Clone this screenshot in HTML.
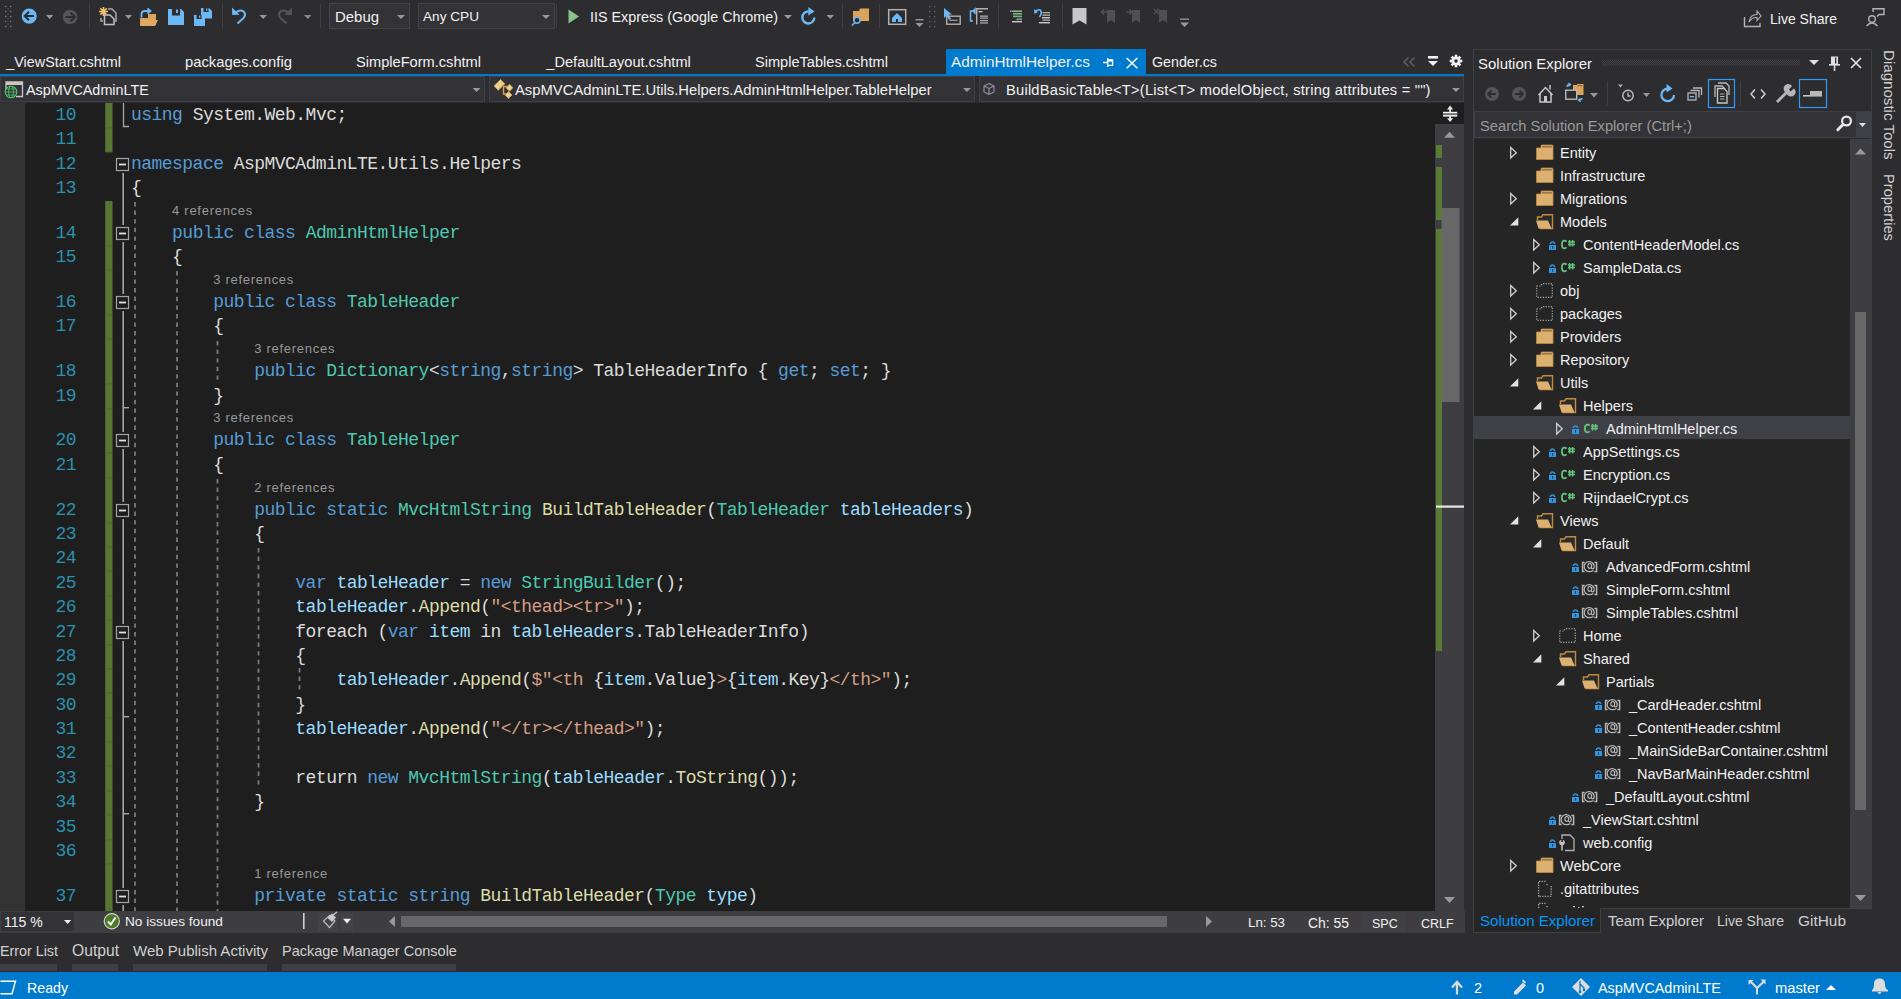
<!DOCTYPE html><html><head><meta charset="utf-8"><style>
html,body{margin:0;padding:0}
body{width:1901px;height:999px;background:#2d2d30;position:relative;overflow:hidden;font-family:'Liberation Sans',sans-serif}
.a{position:absolute}
.t{position:absolute;line-height:0;white-space:pre;font-family:'Liberation Sans',sans-serif}
.c{position:absolute;line-height:0;white-space:pre;font-family:'Liberation Mono',monospace;font-size:18px;letter-spacing:-0.531px;color:#dcdcdc;left:131px}
.k{color:#569cd6}.ty{color:#4ec9b0}.s{color:#d69d85}.v{color:#9cdcfe}.m{color:#dcdcaa}
.ln{position:absolute;line-height:0;white-space:pre;font-family:'Liberation Mono',monospace;font-size:18px;letter-spacing:-0.55px;color:#2b91af;text-align:right;left:20px;width:56px}
.cl{position:absolute;line-height:0;white-space:pre;font-family:'Liberation Sans',sans-serif;font-size:13px;letter-spacing:0.72px;color:#999999}
</style></head><body>

<div class="a" style="left:329px;top:3px;width:81px;height:26px;background:#333337;box-sizing:border-box;border:1px solid #434346;"></div>
<div class="t" style="left:335.0px;top:16.92px;font-size:14.94px;color:#f1f1f1;">Debug</div>
<div class="a" style="left:418px;top:3px;width:137px;height:26px;background:#333337;box-sizing:border-box;border:1px solid #434346;"></div>
<div class="t" style="left:423.0px;top:17.37px;font-size:13.63px;color:#f1f1f1;">Any CPU</div>
<div class="t" style="left:590.0px;top:17.13px;font-size:14.33px;color:#f1f1f1;">IIS Express (Google Chrome)</div>
<div class="t" style="left:1770.0px;top:19.23px;font-size:14.02px;color:#f1f1f1;">Live Share</div>
<svg class="a" style="left:0;top:0" width="1901" height="40" viewBox="0 0 1901 40"><rect x="5" y="5.8" width="1.4" height="1.4" fill="#777"/><rect x="10" y="5.8" width="1.4" height="1.4" fill="#777"/><rect x="5" y="10.8" width="1.4" height="1.4" fill="#777"/><rect x="10" y="10.8" width="1.4" height="1.4" fill="#777"/><rect x="5" y="15.8" width="1.4" height="1.4" fill="#777"/><rect x="10" y="15.8" width="1.4" height="1.4" fill="#777"/><rect x="5" y="20.8" width="1.4" height="1.4" fill="#777"/><rect x="10" y="20.8" width="1.4" height="1.4" fill="#777"/><rect x="5" y="25.8" width="1.4" height="1.4" fill="#777"/><rect x="10" y="25.8" width="1.4" height="1.4" fill="#777"/><rect x="7.5" y="8.3" width="1.4" height="1.4" fill="#555"/><rect x="7.5" y="13.3" width="1.4" height="1.4" fill="#555"/><rect x="7.5" y="18.3" width="1.4" height="1.4" fill="#555"/><rect x="7.5" y="23.3" width="1.4" height="1.4" fill="#555"/><circle cx="29.2" cy="16.1" r="7.6" fill="#6cb8f6"/><path d="M24.5 16 H34 M29 11.8 L24.7 16 L29 20.2" stroke="#2d2d30" stroke-width="2.1" fill="none"/><path d="M46 15 H53.3 L49.65 19 Z" fill="#999999"/><circle cx="70.1" cy="17" r="7.3" fill="#555"/><path d="M65.5 17 H75 M70.5 12.8 L74.8 17 L70.5 21.2" stroke="#2d2d30" stroke-width="2.1" fill="none"/><rect x="89" y="4" width="1" height="24" fill="#3f3f46"/><path d="M103.5 7 V16 M99 11.5 H108 M100.3 8.3 L106.7 14.7 M106.7 8.3 L100.3 14.7" stroke="#f0c070" stroke-width="1.6"/><path d="M108 9 H112 L116 13 V22 M101 18 V21 H103" stroke="#a8a8a8" stroke-width="1.5" fill="none"/><path d="M104.5 15 H110 L114 19 V24.5 H104.5 Z" stroke="#c0c0c0" stroke-width="1.5" fill="none"/><path d="M125 15 H132 L128.5 19 Z" fill="#999999"/><path d="M140 18 H148 V14 H156 V25 H140 Z" fill="#dca35a"/><path d="M142 20 H158 L155 26 H140 Z" fill="#e2aa60"/><path d="M141.5 17.5 V14 Q141.5 11 145 11 H150 M147.5 8.3 L150.5 11 L147.5 13.7" stroke="#6cb8f6" stroke-width="1.8" fill="none"/><path d="M168 9 H181 L184 12 V25 H168 Z" fill="#6cb8f6"/><rect x="172" y="9" width="8" height="6.5" fill="#2d2d30"/><rect x="176" y="9.5" width="2" height="3.5" fill="#6cb8f6"/><path d="M201 8 H209 L212 11 V18.5 H201 Z" fill="#6cb8f6"/><rect x="203.5" y="8" width="5" height="4" fill="#2d2d30"/><rect x="206" y="8.5" width="1.3" height="2.3" fill="#6cb8f6"/><path d="M194 15 H202 L205 18 V26 H194 Z" fill="#6cb8f6"/><rect x="196.5" y="15" width="5" height="4" fill="#2d2d30"/><rect x="199" y="15.5" width="1.3" height="2.3" fill="#6cb8f6"/><rect x="222" y="4" width="1" height="24" fill="#3f3f46"/><path d="M236 12.5 Q240 9 243.5 11.5 Q246.5 14.5 243.5 18 L237.5 23.5" stroke="#6cb8f6" stroke-width="2" fill="none"/><path d="M232 7.5 L232.2 15 L239.5 14.8 Z" fill="#6cb8f6"/><path d="M259.5 15 H267.0 L263.25 19 Z" fill="#999999"/><path d="M288 12.5 Q284 9 280.5 11.5 Q277.5 14.5 280.5 18 L286.5 23.5" stroke="#555" stroke-width="2" fill="none"/><path d="M292 7.5 L291.8 15 L284.5 14.8 Z" fill="#555"/><path d="M304 15 H311.5 L307.75 19 Z" fill="#888"/><rect x="320" y="4" width="1" height="24" fill="#3f3f46"/><path d="M397 15 H405 L401.0 19 Z" fill="#999999"/><path d="M542 15 H550 L546.0 19 Z" fill="#999999"/><rect x="556" y="4" width="1" height="24" fill="#3f3f46"/><path d="M568.5 9.5 V23.5 L579 16.5 Z" fill="#89c58b"/><path d="M784 15 H792 L788.0 19 Z" fill="#999999"/><path d="M814.3 17.5 A6 6 0 1 1 808.5 11.5" stroke="#6cb8f6" stroke-width="2.4" fill="none"/><path d="M808.3 7 L814.6 11.5 L808.3 15.6 Z" fill="#6cb8f6"/><path d="M826.5 15 H834.0 L830.25 19 Z" fill="#999999"/><rect x="842" y="4" width="1" height="24" fill="#3f3f46"/><path d="M853 11 H859 L860 8.5 H869 V21 H853 Z" fill="#dca35a"/><circle cx="857" cy="20.2" r="3" stroke="#6cb8f6" stroke-width="1.5" fill="#2d2d30"/><path d="M855 22.5 L852 25.5" stroke="#6cb8f6" stroke-width="1.6"/><rect x="879" y="4" width="1" height="24" fill="#3f3f46"/><rect x="888.7" y="9.7" width="17" height="14.6" stroke="#b0b0b0" stroke-width="1.5" fill="none"/><path d="M892 18 L897 13 L902 18 V22 H892 Z" fill="#6cb8f6"/><rect x="896" y="19" width="2" height="3" fill="#2d2d30"/><rect x="915.5" y="19" width="8" height="1.4" fill="#999"/><path d="M915.5 23 H923.5 L919.5 27 Z" fill="#999999"/><rect x="929" y="5.9" width="1.3" height="1.3" fill="#666"/><rect x="934" y="5.9" width="1.3" height="1.3" fill="#666"/><rect x="929" y="10.9" width="1.3" height="1.3" fill="#666"/><rect x="934" y="10.9" width="1.3" height="1.3" fill="#666"/><rect x="929" y="15.9" width="1.3" height="1.3" fill="#666"/><rect x="934" y="15.9" width="1.3" height="1.3" fill="#666"/><rect x="929" y="20.9" width="1.3" height="1.3" fill="#666"/><rect x="934" y="20.9" width="1.3" height="1.3" fill="#666"/><rect x="929" y="25.9" width="1.3" height="1.3" fill="#666"/><rect x="934" y="25.9" width="1.3" height="1.3" fill="#666"/><path d="M944 8 V18 L946.5 15.5 L949 20 L951 19 L948.7 14.7 L952 14.5 Z" fill="#6cb8f6"/><rect x="946.7" y="16.2" width="13.5" height="8" stroke="#b0b0b0" stroke-width="1.4" fill="none"/><rect x="949.5" y="19.7" width="8" height="1.3" fill="#999"/><path d="M973 11 H970.5 V21 H973 M970.5 11 H975 M973 11 L975 9 L975 13 Z" stroke="#6cb8f6" stroke-width="1.5" fill="none"/><path d="M976.7 24.5 V8.7 H988" stroke="#b0b0b0" stroke-width="1.4" fill="none"/><rect x="978.5" y="11" width="4" height="1.3" fill="#ccc"/><rect x="980" y="15.5" width="8" height="1.3" fill="#aaa"/><rect x="980" y="17.5" width="8" height="1.3" fill="#aaa"/><rect x="980" y="20" width="8" height="1.3" fill="#aaa"/><rect x="980" y="22.3" width="8" height="1.3" fill="#aaa"/><rect x="998" y="4" width="1" height="24" fill="#3f3f46"/><rect x="1010" y="10.6" width="1.5" height="1.2" fill="#ccc"/><rect x="1012" y="10.6" width="10" height="1.2" fill="#ccc"/><rect x="1013" y="13" width="9" height="1.6" fill="#6fbf6f"/><rect x="1013" y="15.6" width="9" height="1.6" fill="#6fbf6f"/><rect x="1016.5" y="18.5" width="5.5" height="1.6" fill="#999"/><rect x="1012" y="21" width="10" height="1.4" fill="#ccc"/><path d="M1035 12 Q1037 9 1040 10 Q1043 12 1039.5 17" stroke="#6cb8f6" stroke-width="1.6" fill="none"/><path d="M1034 9 L1034.5 14 L1038 12 Z" fill="#6cb8f6"/><rect x="1042.5" y="12" width="7.5" height="1.4" fill="#aaa"/><rect x="1042.5" y="14.5" width="7.5" height="1.4" fill="#aaa"/><rect x="1042" y="17" width="8" height="1.4" fill="#ccc"/><rect x="1042.5" y="19.4" width="7.5" height="1.4" fill="#aaa"/><rect x="1039" y="22" width="11" height="1.4" fill="#ccc"/><rect x="1062" y="4" width="1" height="24" fill="#3f3f46"/><path d="M1072.5 8 H1086.5 V24.5 L1079.5 20.5 L1072.5 24.5 Z" fill="#c8c8c8"/><path d="M1107 10 H1115 V23 L1111 20 L1107 23 Z" fill="#505050"/><path d="M1132 10 H1140 V23 L1136 20 L1132 23 Z" fill="#505050"/><path d="M1159 10 H1167 V23 L1163 20 L1159 23 Z" fill="#505050"/><path d="M1107 12 H1101.5 M1104 9.5 L1101.5 12 L1104 14.5" stroke="#505050" stroke-width="1.6" fill="none"/><path d="M1126 12 H1132 M1129.5 9.5 L1132 12 L1129.5 14.5" stroke="#505050" stroke-width="1.6" fill="none"/><path d="M1154 9 L1159 14 M1159 9 L1154 14" stroke="#505050" stroke-width="1.6"/><rect x="1180" y="18.5" width="9" height="1.3" fill="#999"/><path d="M1180 22.5 H1189 L1184.5 27.0 Z" fill="#999999"/><path d="M1744.5 17 V26.5 H1760 V23" stroke="#b4b4b4" stroke-width="1.4" fill="none"/><path d="M1749 22 Q1750 14.5 1757 14.5 V11 L1761 16 L1757 20.5 V17.5 Q1752 17 1749 22 Z" stroke="#b4b4b4" stroke-width="1.1" fill="none"/><circle cx="1872" cy="19" r="3.3" stroke="#b4b4b4" stroke-width="1.4" fill="none"/><path d="M1866.5 26 Q1872 20 1877.5 26" stroke="#b4b4b4" stroke-width="1.4" fill="none"/><path d="M1873 12 V8.7 H1884 V14.5 H1879 L1877 16.5" stroke="#b4b4b4" stroke-width="1.4" fill="none"/></svg>
<div class="a" style="left:946px;top:49px;width:200px;height:25px;background:#007acc;"></div>
<div class="a" style="left:0px;top:74px;width:1464px;height:2px;background:#007acc;"></div>
<div class="t" style="left:6.29px;top:62.11px;font-size:14.37px;color:#f1f1f1;">_ViewStart.cshtml</div>
<div class="t" style="left:185.0px;top:61.96px;font-size:14.81px;color:#f1f1f1;">packages.config</div>
<div class="t" style="left:356.0px;top:62.03px;font-size:14.61px;color:#f1f1f1;">SimpleForm.cshtml</div>
<div class="t" style="left:546.29px;top:62.03px;font-size:14.62px;color:#f1f1f1;">_DefaultLayout.cshtml</div>
<div class="t" style="left:755.0px;top:62.04px;font-size:14.59px;color:#f1f1f1;">SimpleTables.cshtml</div>
<div class="t" style="left:951.0px;top:61.78px;font-size:15.34px;color:#f1f1f1;">AdminHtmlHelper.cs</div>
<div class="t" style="left:1152.0px;top:62.15px;font-size:14.25px;color:#f1f1f1;">Gender.cs</div>
<div class="a" style="left:0px;top:76px;width:485px;height:26px;background:#333337;box-sizing:border-box;border:1px solid #3f3f46;"></div>
<div class="a" style="left:489px;top:76px;width:486px;height:26px;background:#333337;box-sizing:border-box;border:1px solid #3f3f46;"></div>
<div class="a" style="left:979px;top:76px;width:485px;height:26px;background:#333337;box-sizing:border-box;border:1px solid #3f3f46;"></div>
<div class="t" style="left:26.0px;top:90.1px;font-size:14.4px;color:#f1f1f1;">AspMVCAdminLTE</div>
<div class="t" style="left:515.0px;top:89.96px;font-size:14.81px;color:#f1f1f1;">AspMVCAdminLTE.Utils.Helpers.AdminHtmlHelper.TableHelper</div>
<div class="t" style="left:1006px;top:90.0px;font-size:14.7px;color:#f1f1f1;letter-spacing:0.22px">BuildBasicTable&lt;T&gt;(List&lt;T&gt; modelObject, string attributes = &quot;&quot;)</div>
<svg class="a" style="left:0;top:40px" width="1470" height="70" viewBox="0 40 1470 70"><path d="M1103 62.5 H1107.5 M1107.7 58 V67 M1108 60 H1112.6 V65.3 H1108" stroke="#ffffff" stroke-width="1.3" fill="none"/><rect x="1108" y="59.5" width="5" height="2.2" fill="#ffffff"/><path d="M1126.7 58 L1137.3 68.3 M1137.3 58 L1126.7 68.3" stroke="#ffffff" stroke-width="1.6"/><path d="M1408.5 57.5 L1404 62 L1408.5 66.5 M1414.5 57.5 L1410 62 L1414.5 66.5" stroke="#5a5e62" stroke-width="1.6" fill="none"/><rect x="1428" y="56" width="10" height="2.6" fill="#f0f0f0"/><path d="M1428 61 H1438 L1433 66 Z" fill="#f0f0f0"/><g transform="translate(1456 61)"><circle r="4.6" fill="#f0f0f0"/><rect x="-1.3" y="-6.3" width="2.6" height="3" fill="#f0f0f0" transform="rotate(0)"/><rect x="-1.3" y="-6.3" width="2.6" height="3" fill="#f0f0f0" transform="rotate(45)"/><rect x="-1.3" y="-6.3" width="2.6" height="3" fill="#f0f0f0" transform="rotate(90)"/><rect x="-1.3" y="-6.3" width="2.6" height="3" fill="#f0f0f0" transform="rotate(135)"/><rect x="-1.3" y="-6.3" width="2.6" height="3" fill="#f0f0f0" transform="rotate(180)"/><rect x="-1.3" y="-6.3" width="2.6" height="3" fill="#f0f0f0" transform="rotate(225)"/><rect x="-1.3" y="-6.3" width="2.6" height="3" fill="#f0f0f0" transform="rotate(270)"/><rect x="-1.3" y="-6.3" width="2.6" height="3" fill="#f0f0f0" transform="rotate(315)"/><circle r="1.8" fill="#2d2d30"/></g><path d="M6 89 V82 H22.5 V96.5 H16" stroke="#c8c8c0" stroke-width="1.3" fill="none"/><rect x="6" y="82" width="16.5" height="3" fill="#c8c8c0"/><circle cx="11" cy="92" r="5.8" stroke="#4ec96a" stroke-width="1.1" fill="#333337"/><path d="M5.5 92 H16.5 M6.5 89 H15.5 M6.5 95 H15.5" stroke="#4ec96a" stroke-width="0.8"/><ellipse cx="11" cy="92" rx="2.4" ry="5.8" stroke="#4ec96a" stroke-width="0.8" fill="none"/><path d="M472.5 88 H480.5 L476.5 92 Z" fill="#999"/><path d="M503 86.5 H507 M503.5 86.5 V94 H506" stroke="#d8a050" stroke-width="1.4" fill="none"/><path d="M494 86 L500.5 79.5 L504.8 83.8 L498.3 90.3 Z" fill="#e8d090" stroke="#d09848" stroke-width="0.8"/><path d="M509.5 84.3 L513 87.8 L509.5 91.3 L506 87.8 Z" fill="#e8d090" stroke="#d09848" stroke-width="0.8"/><path d="M508.5 91.5 L512 95 L508.5 98.5 L505 95 Z" fill="#e8d090" stroke="#d09848" stroke-width="0.8"/><path d="M963 88 H971 L967 92 Z" fill="#999"/><path d="M989 83.5 L994 86 V92 L989 94.5 L984 92 V86 Z M984 86 L989 88.5 L994 86 M989 88.5 V94.5" stroke="#9a90a8" stroke-width="1.1" fill="none"/><path d="M1452 88 H1460 L1456 92 Z" fill="#999"/></svg>
<div class="a" style="left:0px;top:103px;width:1435px;height:808px;background:#1e1e1e;"></div>
<div class="a" style="left:0px;top:103px;width:25px;height:808px;background:#333333;"></div>
<div class="a" style="left:1435px;top:103px;width:29px;height:21px;background:#1e1e1e;"></div>
<div class="a" style="left:1435px;top:124px;width:29px;height:787px;background:#3e3e42;"></div>
<div class="ln" style="top:115px">10</div>
<div class="c" style="top:115px"><span class="k">using</span> System.Web.Mvc;</div>
<div class="ln" style="top:139px">11</div>
<div class="ln" style="top:164px">12</div>
<div class="c" style="top:164px"><span class="k">namespace</span> AspMVCAdminLTE.Utils.Helpers</div>
<div class="ln" style="top:188px">13</div>
<div class="c" style="top:188px">{</div>
<div class="ln" style="top:233px">14</div>
<div class="c" style="top:233px">    <span class="k">public</span> <span class="k">class</span> <span class="ty">AdminHtmlHelper</span></div>
<div class="cl" style="left:172.08px;top:211px">4 references</div>
<div class="ln" style="top:257px">15</div>
<div class="c" style="top:257px">    {</div>
<div class="ln" style="top:302px">16</div>
<div class="c" style="top:302px">        <span class="k">public</span> <span class="k">class</span> <span class="ty">TableHeader</span></div>
<div class="cl" style="left:213.15px;top:280px">3 references</div>
<div class="ln" style="top:326px">17</div>
<div class="c" style="top:326px">        {</div>
<div class="ln" style="top:371px">18</div>
<div class="c" style="top:371px">            <span class="k">public</span> <span class="ty">Dictionary</span>&lt;<span class="k">string</span>,<span class="k">string</span>&gt; TableHeaderInfo { <span class="k">get</span>; <span class="k">set</span>; }</div>
<div class="cl" style="left:254.23px;top:349px">3 references</div>
<div class="ln" style="top:396px">19</div>
<div class="c" style="top:396px">        }</div>
<div class="ln" style="top:440px">20</div>
<div class="c" style="top:440px">        <span class="k">public</span> <span class="k">class</span> <span class="ty">TableHelper</span></div>
<div class="cl" style="left:213.15px;top:418px">3 references</div>
<div class="ln" style="top:465px">21</div>
<div class="c" style="top:465px">        {</div>
<div class="ln" style="top:510px">22</div>
<div class="c" style="top:510px">            <span class="k">public</span> <span class="k">static</span> <span class="ty">MvcHtmlString</span> <span class="m">BuildTableHeader</span>(<span class="ty">TableHeader</span> <span class="v">tableHeaders</span>)</div>
<div class="cl" style="left:254.23px;top:488px">2 references</div>
<div class="ln" style="top:534px">23</div>
<div class="c" style="top:534px">            {</div>
<div class="ln" style="top:558px">24</div>
<div class="ln" style="top:583px">25</div>
<div class="c" style="top:583px">                <span class="k">var</span> <span class="v">tableHeader</span> = <span class="k">new</span> <span class="ty">StringBuilder</span>();</div>
<div class="ln" style="top:607px">26</div>
<div class="c" style="top:607px">                <span class="v">tableHeader</span>.<span class="m">Append</span>(<span class="s">"&lt;thead&gt;&lt;tr&gt;"</span>);</div>
<div class="ln" style="top:632px">27</div>
<div class="c" style="top:632px">                foreach (<span class="k">var</span> <span class="v">item</span> in <span class="v">tableHeaders</span>.TableHeaderInfo)</div>
<div class="ln" style="top:656px">28</div>
<div class="c" style="top:656px">                {</div>
<div class="ln" style="top:680px">29</div>
<div class="c" style="top:680px">                    <span class="v">tableHeader</span>.<span class="m">Append</span>(<span class="s">$"&lt;th </span>{<span class="v">item</span>.Value}<span class="s">&gt;</span>{<span class="v">item</span>.Key}<span class="s">&lt;/th&gt;"</span>);</div>
<div class="ln" style="top:705px">30</div>
<div class="c" style="top:705px">                }</div>
<div class="ln" style="top:729px">31</div>
<div class="c" style="top:729px">                <span class="v">tableHeader</span>.<span class="m">Append</span>(<span class="s">"&lt;/tr&gt;&lt;/thead&gt;"</span>);</div>
<div class="ln" style="top:753px">32</div>
<div class="ln" style="top:778px">33</div>
<div class="c" style="top:778px">                return <span class="k">new</span> <span class="ty">MvcHtmlString</span>(<span class="v">tableHeader</span>.<span class="m">ToString</span>());</div>
<div class="ln" style="top:802px">34</div>
<div class="c" style="top:802px">            }</div>
<div class="ln" style="top:827px">35</div>
<div class="ln" style="top:851px">36</div>
<div class="ln" style="top:896px">37</div>
<div class="c" style="top:896px">            <span class="k">private</span> <span class="k">static</span> <span class="k">string</span> <span class="m">BuildTableHeader</span>(<span class="ty">Type</span> <span class="v">type</span>)</div>
<div class="cl" style="left:254.23px;top:874px">1 reference</div>
<svg class="a" style="left:0;top:0" width="1464" height="911" viewBox="0 0 1464 911"><rect x="105.2" y="103" width="7.3" height="49" fill="#577633"/><rect x="105.2" y="201" width="7.3" height="710" fill="#577633"/><rect x="105.2" y="127.4" width="7.3" height="1" fill="#4d6a2c"/><rect x="105.2" y="151.4" width="7.3" height="1" fill="#4d6a2c"/><rect x="105.2" y="245.4" width="7.3" height="1" fill="#4d6a2c"/><rect x="105.2" y="269.4" width="7.3" height="1" fill="#4d6a2c"/><rect x="105.2" y="314.4" width="7.3" height="1" fill="#4d6a2c"/><rect x="105.2" y="338.4" width="7.3" height="1" fill="#4d6a2c"/><rect x="105.2" y="383.4" width="7.3" height="1" fill="#4d6a2c"/><rect x="105.2" y="408.4" width="7.3" height="1" fill="#4d6a2c"/><rect x="105.2" y="452.4" width="7.3" height="1" fill="#4d6a2c"/><rect x="105.2" y="477.4" width="7.3" height="1" fill="#4d6a2c"/><rect x="105.2" y="522.4" width="7.3" height="1" fill="#4d6a2c"/><rect x="105.2" y="546.4" width="7.3" height="1" fill="#4d6a2c"/><rect x="105.2" y="570.4" width="7.3" height="1" fill="#4d6a2c"/><rect x="105.2" y="595.4" width="7.3" height="1" fill="#4d6a2c"/><rect x="105.2" y="619.4" width="7.3" height="1" fill="#4d6a2c"/><rect x="105.2" y="644.4" width="7.3" height="1" fill="#4d6a2c"/><rect x="105.2" y="668.4" width="7.3" height="1" fill="#4d6a2c"/><rect x="105.2" y="692.4" width="7.3" height="1" fill="#4d6a2c"/><rect x="105.2" y="717.4" width="7.3" height="1" fill="#4d6a2c"/><rect x="105.2" y="741.4" width="7.3" height="1" fill="#4d6a2c"/><rect x="105.2" y="765.4" width="7.3" height="1" fill="#4d6a2c"/><rect x="105.2" y="790.4" width="7.3" height="1" fill="#4d6a2c"/><rect x="105.2" y="814.4" width="7.3" height="1" fill="#4d6a2c"/><rect x="105.2" y="839.4" width="7.3" height="1" fill="#4d6a2c"/><rect x="105.2" y="863.4" width="7.3" height="1" fill="#4d6a2c"/><rect x="105.2" y="908.4" width="7.3" height="1" fill="#4d6a2c"/><path d="M123.5 103 V126.5 H129" stroke="#a5a5a5" stroke-width="1.3" fill="none"/><rect x="116.5" y="158.5" width="12" height="12" stroke="#a5a5a5" stroke-width="1.2" fill="#1e1e1e"/><rect x="119" y="163.6" width="7" height="1.8" fill="#e0e0e0"/><rect x="116.5" y="227.5" width="12" height="12" stroke="#a5a5a5" stroke-width="1.2" fill="#1e1e1e"/><rect x="119" y="232.6" width="7" height="1.8" fill="#e0e0e0"/><rect x="116.5" y="296.5" width="12" height="12" stroke="#a5a5a5" stroke-width="1.2" fill="#1e1e1e"/><rect x="119" y="301.6" width="7" height="1.8" fill="#e0e0e0"/><rect x="116.5" y="434.5" width="12" height="12" stroke="#a5a5a5" stroke-width="1.2" fill="#1e1e1e"/><rect x="119" y="439.6" width="7" height="1.8" fill="#e0e0e0"/><rect x="116.5" y="504.5" width="12" height="12" stroke="#a5a5a5" stroke-width="1.2" fill="#1e1e1e"/><rect x="119" y="509.6" width="7" height="1.8" fill="#e0e0e0"/><rect x="116.5" y="626.5" width="12" height="12" stroke="#a5a5a5" stroke-width="1.2" fill="#1e1e1e"/><rect x="119" y="631.6" width="7" height="1.8" fill="#e0e0e0"/><rect x="116.5" y="890.5" width="12" height="12" stroke="#a5a5a5" stroke-width="1.2" fill="#1e1e1e"/><rect x="119" y="895.6" width="7" height="1.8" fill="#e0e0e0"/><rect x="122.4" y="173" width="1.6" height="52" fill="#a5a5a5"/><rect x="122.4" y="242" width="1.6" height="52" fill="#a5a5a5"/><rect x="122.4" y="311" width="1.6" height="121" fill="#a5a5a5"/><rect x="122.4" y="449" width="1.6" height="53" fill="#a5a5a5"/><rect x="122.4" y="519" width="1.6" height="105" fill="#a5a5a5"/><rect x="122.4" y="641" width="1.6" height="247" fill="#a5a5a5"/><rect x="122.4" y="905" width="1.6" height="6" fill="#a5a5a5"/><rect x="123" y="407" width="6" height="1.4" fill="#a5a5a5"/><rect x="123" y="716" width="6" height="1.4" fill="#a5a5a5"/><rect x="123" y="813" width="6" height="1.4" fill="#a5a5a5"/><line x1="135" y1="202" x2="135" y2="911" stroke="#7a7a7a" stroke-width="1.8" stroke-dasharray="4.4 4.2"/><line x1="177" y1="271" x2="177" y2="911" stroke="#7a7a7a" stroke-width="1.8" stroke-dasharray="4.4 4.2"/><line x1="217.5" y1="341" x2="217.5" y2="384" stroke="#7a7a7a" stroke-width="1.8" stroke-dasharray="4.4 4.2"/><line x1="217.5" y1="479" x2="217.5" y2="911" stroke="#7a7a7a" stroke-width="1.8" stroke-dasharray="4.4 4.2"/><line x1="258.5" y1="548" x2="258.5" y2="789" stroke="#7a7a7a" stroke-width="1.8" stroke-dasharray="4.4 4.2"/><line x1="299.5" y1="668" x2="299.5" y2="693" stroke="#7a7a7a" stroke-width="1.8" stroke-dasharray="4.4 4.2"/><rect x="1449.2" y="108" width="1.8" height="12" fill="#e8e8e8"/><path d="M1450.1 105.6 L1447 109.6 H1453.2 Z M1450.1 122 L1447 118.2 H1453.2 Z" fill="#e8e8e8"/><rect x="1443" y="111.8" width="14.2" height="4.8" fill="#f0f0f0"/><rect x="1443" y="113.2" width="14.2" height="1.9" fill="#707070"/><path d="M1444 137.8 H1455 L1449.5 131.8 Z M1444 897 H1455 L1449.5 903 Z" fill="#999"/><rect x="1436" y="145" width="6" height="13" fill="#587c34"/><rect x="1436" y="167" width="6" height="53" fill="#587c34"/><rect x="1436" y="229" width="6" height="422" fill="#587c34"/><rect x="1441.5" y="208" width="18" height="194" fill="#686868"/><rect x="1436" y="505.5" width="28" height="2.2" fill="#e8e8e8"/></svg>
<div class="a" style="left:0px;top:911px;width:1465px;height:22px;background:#3e3e42;"></div>
<div class="a" style="left:1361px;top:912px;width:45px;height:20px;background:#434346;opacity:0.5"></div>
<div class="a" style="left:1px;top:912px;width:73px;height:19px;background:#333337;"></div>
<div class="t" style="left:4px;top:922.24px;font-size:14px;color:#f1f1f1;">115 %</div>
<div class="t" style="left:125.0px;top:922.35px;font-size:13.67px;color:#f1f1f1;">No issues found</div>
<div class="a" style="left:401px;top:916px;width:766px;height:11px;background:#686868;"></div>
<div class="a" style="left:318px;top:913px;width:20px;height:18px;background:#434346;"></div>
<div class="a" style="left:341px;top:913px;width:12px;height:18px;background:#434346;"></div>
<div class="t" style="left:1248.0px;top:923.47px;font-size:13.31px;color:#f1f1f1;">Ln: 53</div>
<div class="t" style="left:1308.0px;top:923.27px;font-size:13.92px;color:#f1f1f1;">Ch: 55</div>
<div class="t" style="left:1372.0px;top:923.75px;font-size:12.5px;color:#f1f1f1;">SPC</div>
<div class="t" style="left:1421.0px;top:923.75px;font-size:12.5px;color:#f1f1f1;">CRLF</div>
<div class="t" style="left:0.0px;top:951.14px;font-size:14.3px;color:#d0d0d0;">Error List</div>
<div class="a" style="left:0px;top:964px;width:57px;height:7px;background:#3f3f46;"></div>
<div class="t" style="left:72.0px;top:950.67px;font-size:15.67px;color:#d0d0d0;">Output</div>
<div class="a" style="left:72px;top:964px;width:46px;height:7px;background:#3f3f46;"></div>
<div class="t" style="left:133.0px;top:950.89px;font-size:15.03px;color:#d0d0d0;">Web Publish Activity</div>
<div class="a" style="left:133px;top:964px;width:134px;height:7px;background:#3f3f46;"></div>
<div class="t" style="left:282.0px;top:951.07px;font-size:14.5px;color:#d0d0d0;">Package Manager Console</div>
<div class="a" style="left:282px;top:964px;width:174px;height:7px;background:#3f3f46;"></div>
<div class="a" style="left:0px;top:972px;width:1901px;height:27px;background:#007acc;"></div>
<div class="t" style="left:27.0px;top:988.18px;font-size:14.19px;color:#ffffff;">Ready</div>
<div class="t" style="left:1474px;top:988.07px;font-size:14.5px;color:#ffffff;">2</div>
<div class="t" style="left:1536px;top:988.07px;font-size:14.5px;color:#ffffff;">0</div>
<div class="t" style="left:1598.0px;top:988.1px;font-size:14.4px;color:#ffffff;">AspMVCAdminLTE</div>
<div class="t" style="left:1775.0px;top:987.99px;font-size:14.73px;color:#ffffff;">master</div>
<div class="a" style="left:1473px;top:49px;width:399px;height:860px;background:#2d2d30;box-sizing:border-box;border:1px solid #3f3f46;"></div>
<div class="t" style="left:1478.0px;top:64.41px;font-size:14.97px;color:#f1f1f1;">Solution Explorer</div>
<div class="a" style="left:1474px;top:111px;width:397px;height:27px;background:#333337;box-sizing:border-box;border:1px solid #3f3f46;"></div>
<div class="t" style="left:1480.0px;top:126.0px;font-size:14.7px;color:#999999;">Search Solution Explorer (Ctrl+;)</div>
<div class="a" style="left:1474px;top:139px;width:376px;height:769px;background:#252526;"></div>
<div class="a" style="left:1850px;top:139px;width:22px;height:769px;background:#3e3e42;"></div>
<div class="a" style="left:1855px;top:312px;width:11px;height:498px;background:#686868;"></div>
<div class="a" style="left:1474px;top:416px;width:376px;height:23px;background:#3f3f46;"></div>
<div class="t" style="left:1560px;top:153.07px;font-size:14.5px;color:#f1f1f1;">Entity</div>
<div class="t" style="left:1560px;top:176.07px;font-size:14.5px;color:#f1f1f1;">Infrastructure</div>
<div class="t" style="left:1560px;top:199.07px;font-size:14.5px;color:#f1f1f1;">Migrations</div>
<div class="t" style="left:1560px;top:222.07px;font-size:14.5px;color:#f1f1f1;">Models</div>
<div class="t" style="left:1583px;top:245.07px;font-size:14.5px;color:#f1f1f1;">ContentHeaderModel.cs</div>
<div class="t" style="left:1583px;top:268.07px;font-size:14.5px;color:#f1f1f1;">SampleData.cs</div>
<div class="t" style="left:1560px;top:291.07px;font-size:14.5px;color:#f1f1f1;">obj</div>
<div class="t" style="left:1560px;top:314.07px;font-size:14.5px;color:#f1f1f1;">packages</div>
<div class="t" style="left:1560px;top:337.07px;font-size:14.5px;color:#f1f1f1;">Providers</div>
<div class="t" style="left:1560px;top:360.07px;font-size:14.5px;color:#f1f1f1;">Repository</div>
<div class="t" style="left:1560px;top:383.07px;font-size:14.5px;color:#f1f1f1;">Utils</div>
<div class="t" style="left:1583px;top:406.07px;font-size:14.5px;color:#f1f1f1;">Helpers</div>
<div class="t" style="left:1606px;top:429.07px;font-size:14.5px;color:#f1f1f1;">AdminHtmlHelper.cs</div>
<div class="t" style="left:1583px;top:452.07px;font-size:14.5px;color:#f1f1f1;">AppSettings.cs</div>
<div class="t" style="left:1583px;top:475.07px;font-size:14.5px;color:#f1f1f1;">Encryption.cs</div>
<div class="t" style="left:1583px;top:498.07px;font-size:14.5px;color:#f1f1f1;">RijndaelCrypt.cs</div>
<div class="t" style="left:1560px;top:521.07px;font-size:14.5px;color:#f1f1f1;">Views</div>
<div class="t" style="left:1583px;top:544.07px;font-size:14.5px;color:#f1f1f1;">Default</div>
<div class="t" style="left:1606px;top:567.07px;font-size:14.5px;color:#f1f1f1;">AdvancedForm.cshtml</div>
<div class="t" style="left:1606px;top:590.07px;font-size:14.5px;color:#f1f1f1;">SimpleForm.cshtml</div>
<div class="t" style="left:1606px;top:613.07px;font-size:14.5px;color:#f1f1f1;">SimpleTables.cshtml</div>
<div class="t" style="left:1583px;top:636.07px;font-size:14.5px;color:#f1f1f1;">Home</div>
<div class="t" style="left:1583px;top:659.07px;font-size:14.5px;color:#f1f1f1;">Shared</div>
<div class="t" style="left:1606px;top:682.07px;font-size:14.5px;color:#f1f1f1;">Partials</div>
<div class="t" style="left:1629px;top:705.07px;font-size:14.5px;color:#f1f1f1;">_CardHeader.cshtml</div>
<div class="t" style="left:1629px;top:728.07px;font-size:14.5px;color:#f1f1f1;">_ContentHeader.cshtml</div>
<div class="t" style="left:1629px;top:751.07px;font-size:14.5px;color:#f1f1f1;">_MainSideBarContainer.cshtml</div>
<div class="t" style="left:1629px;top:774.07px;font-size:14.5px;color:#f1f1f1;">_NavBarMainHeader.cshtml</div>
<div class="t" style="left:1606px;top:797.07px;font-size:14.5px;color:#f1f1f1;">_DefaultLayout.cshtml</div>
<div class="t" style="left:1583px;top:820.07px;font-size:14.5px;color:#f1f1f1;">_ViewStart.cshtml</div>
<div class="t" style="left:1583px;top:843.07px;font-size:14.5px;color:#f1f1f1;">web.config</div>
<div class="t" style="left:1560px;top:866.07px;font-size:14.5px;color:#f1f1f1;">WebCore</div>
<div class="t" style="left:1560px;top:889.07px;font-size:14.5px;color:#f1f1f1;">.gitattributes</div>
<svg class="a" style="left:0;top:0;overflow:hidden" width="1901" height="999" viewBox="0 0 1901 999"><path d="M1510.7 147.5 L1516.3 152.7 L1510.7 157.9 Z" stroke="#d0d0d0" stroke-width="1.3" fill="none"/><path d="M1536.5 148 H1541 V145.7 Q1541 145 1542 145 H1552 Q1553 145 1553 146 V159.5 H1536.5 Z" fill="#dcb070" stroke="#c08a40" stroke-width="0.8"/><rect x="1542" y="146.2" width="10" height="1.3" fill="#8a6a3a"/><path d="M1536.5 171 H1541 V168.7 Q1541 168 1542 168 H1552 Q1553 168 1553 169 V182.5 H1536.5 Z" fill="#dcb070" stroke="#c08a40" stroke-width="0.8"/><rect x="1542" y="169.2" width="10" height="1.3" fill="#8a6a3a"/><path d="M1510.7 193.5 L1516.3 198.7 L1510.7 203.9 Z" stroke="#d0d0d0" stroke-width="1.3" fill="none"/><path d="M1536.5 194 H1541 V191.7 Q1541 191 1542 191 H1552 Q1553 191 1553 192 V205.5 H1536.5 Z" fill="#dcb070" stroke="#c08a40" stroke-width="0.8"/><rect x="1542" y="192.2" width="10" height="1.3" fill="#8a6a3a"/><path d="M1510 225.5 H1518.3 V217.2 Z" fill="#e2e2e2"/><path d="M1537.5 220 V217 H1541.5 L1543 214.8 H1552.5 V228.5 H1539.5" stroke="#c08a40" stroke-width="1.4" fill="#2a2a2a"/><path d="M1536 220.5 H1548 L1551.5 228.5 H1538.5 Z" fill="#dcb070"/><path d="M1533.7 239.5 L1539.3 244.7 L1533.7 249.9 Z" stroke="#d0d0d0" stroke-width="1.3" fill="none"/><path d="M1549.9 243.9 Q1552.5 239.9 1555.1 243.9" stroke="#2f95e0" stroke-width="1.5" fill="none"/><rect x="1549" y="245" width="7" height="5" fill="#2f95e0"/><rect x="1552" y="246" width="1.1" height="2.6" fill="#1a3a5a"/><path d="M1566.6 241.6 Q1565.8 240.6 1564.4 240.6 Q1561.9 240.6 1561.9 244.5 Q1561.9 248.3 1564.4 248.3 Q1565.8 248.3 1566.6 247.3" stroke="#62c47c" stroke-width="1.8" fill="none"/><path d="M1569.6 240 V246.5 M1572.6 240 V246.5 M1568 242 H1575 M1568 244.6 H1575" stroke="#62c47c" stroke-width="1.5"/><path d="M1533.7 262.5 L1539.3 267.7 L1533.7 272.9 Z" stroke="#d0d0d0" stroke-width="1.3" fill="none"/><path d="M1549.9 266.9 Q1552.5 262.9 1555.1 266.9" stroke="#2f95e0" stroke-width="1.5" fill="none"/><rect x="1549" y="268" width="7" height="5" fill="#2f95e0"/><rect x="1552" y="269" width="1.1" height="2.6" fill="#1a3a5a"/><path d="M1566.6 264.6 Q1565.8 263.6 1564.4 263.6 Q1561.9 263.6 1561.9 267.5 Q1561.9 271.3 1564.4 271.3 Q1565.8 271.3 1566.6 270.3" stroke="#62c47c" stroke-width="1.8" fill="none"/><path d="M1569.6 263 V269.5 M1572.6 263 V269.5 M1568 265 H1575 M1568 267.6 H1575" stroke="#62c47c" stroke-width="1.5"/><path d="M1510.7 285.5 L1516.3 290.7 L1510.7 295.9 Z" stroke="#d0d0d0" stroke-width="1.3" fill="none"/><path d="M1536.7 286 H1541 L1542 283.7 H1552.3 V297.3 H1536.7 Z" stroke="#a0a0a0" stroke-width="1.2" stroke-dasharray="1.3 1.3" fill="none"/><path d="M1510.7 308.5 L1516.3 313.7 L1510.7 318.9 Z" stroke="#d0d0d0" stroke-width="1.3" fill="none"/><path d="M1536.7 309 H1541 L1542 306.7 H1552.3 V320.3 H1536.7 Z" stroke="#a0a0a0" stroke-width="1.2" stroke-dasharray="1.3 1.3" fill="none"/><path d="M1510.7 331.5 L1516.3 336.7 L1510.7 341.9 Z" stroke="#d0d0d0" stroke-width="1.3" fill="none"/><path d="M1536.5 332 H1541 V329.7 Q1541 329 1542 329 H1552 Q1553 329 1553 330 V343.5 H1536.5 Z" fill="#dcb070" stroke="#c08a40" stroke-width="0.8"/><rect x="1542" y="330.2" width="10" height="1.3" fill="#8a6a3a"/><path d="M1510.7 354.5 L1516.3 359.7 L1510.7 364.9 Z" stroke="#d0d0d0" stroke-width="1.3" fill="none"/><path d="M1536.5 355 H1541 V352.7 Q1541 352 1542 352 H1552 Q1553 352 1553 353 V366.5 H1536.5 Z" fill="#dcb070" stroke="#c08a40" stroke-width="0.8"/><rect x="1542" y="353.2" width="10" height="1.3" fill="#8a6a3a"/><path d="M1510 386.5 H1518.3 V378.2 Z" fill="#e2e2e2"/><path d="M1537.5 381 V378 H1541.5 L1543 375.8 H1552.5 V389.5 H1539.5" stroke="#c08a40" stroke-width="1.4" fill="#2a2a2a"/><path d="M1536 381.5 H1548 L1551.5 389.5 H1538.5 Z" fill="#dcb070"/><path d="M1533 409.5 H1541.3 V401.2 Z" fill="#e2e2e2"/><path d="M1560.5 404 V401 H1564.5 L1566 398.8 H1575.5 V412.5 H1562.5" stroke="#c08a40" stroke-width="1.4" fill="#2a2a2a"/><path d="M1559 404.5 H1571 L1574.5 412.5 H1561.5 Z" fill="#dcb070"/><path d="M1556.7 423.5 L1562.3 428.7 L1556.7 433.9 Z" stroke="#d0d0d0" stroke-width="1.3" fill="none"/><path d="M1572.9 427.9 Q1575.5 423.9 1578.1 427.9" stroke="#2f95e0" stroke-width="1.5" fill="none"/><rect x="1572" y="429" width="7" height="5" fill="#2f95e0"/><rect x="1575" y="430" width="1.1" height="2.6" fill="#1a3a5a"/><path d="M1589.6 425.6 Q1588.8 424.6 1587.4 424.6 Q1584.9 424.6 1584.9 428.5 Q1584.9 432.3 1587.4 432.3 Q1588.8 432.3 1589.6 431.3" stroke="#62c47c" stroke-width="1.8" fill="none"/><path d="M1592.6 424 V430.5 M1595.6 424 V430.5 M1591 426 H1598 M1591 428.6 H1598" stroke="#62c47c" stroke-width="1.5"/><path d="M1533.7 446.5 L1539.3 451.7 L1533.7 456.9 Z" stroke="#d0d0d0" stroke-width="1.3" fill="none"/><path d="M1549.9 450.9 Q1552.5 446.9 1555.1 450.9" stroke="#2f95e0" stroke-width="1.5" fill="none"/><rect x="1549" y="452" width="7" height="5" fill="#2f95e0"/><rect x="1552" y="453" width="1.1" height="2.6" fill="#1a3a5a"/><path d="M1566.6 448.6 Q1565.8 447.6 1564.4 447.6 Q1561.9 447.6 1561.9 451.5 Q1561.9 455.3 1564.4 455.3 Q1565.8 455.3 1566.6 454.3" stroke="#62c47c" stroke-width="1.8" fill="none"/><path d="M1569.6 447 V453.5 M1572.6 447 V453.5 M1568 449 H1575 M1568 451.6 H1575" stroke="#62c47c" stroke-width="1.5"/><path d="M1533.7 469.5 L1539.3 474.7 L1533.7 479.9 Z" stroke="#d0d0d0" stroke-width="1.3" fill="none"/><path d="M1549.9 473.9 Q1552.5 469.9 1555.1 473.9" stroke="#2f95e0" stroke-width="1.5" fill="none"/><rect x="1549" y="475" width="7" height="5" fill="#2f95e0"/><rect x="1552" y="476" width="1.1" height="2.6" fill="#1a3a5a"/><path d="M1566.6 471.6 Q1565.8 470.6 1564.4 470.6 Q1561.9 470.6 1561.9 474.5 Q1561.9 478.3 1564.4 478.3 Q1565.8 478.3 1566.6 477.3" stroke="#62c47c" stroke-width="1.8" fill="none"/><path d="M1569.6 470 V476.5 M1572.6 470 V476.5 M1568 472 H1575 M1568 474.6 H1575" stroke="#62c47c" stroke-width="1.5"/><path d="M1533.7 492.5 L1539.3 497.7 L1533.7 502.9 Z" stroke="#d0d0d0" stroke-width="1.3" fill="none"/><path d="M1549.9 496.9 Q1552.5 492.9 1555.1 496.9" stroke="#2f95e0" stroke-width="1.5" fill="none"/><rect x="1549" y="498" width="7" height="5" fill="#2f95e0"/><rect x="1552" y="499" width="1.1" height="2.6" fill="#1a3a5a"/><path d="M1566.6 494.6 Q1565.8 493.6 1564.4 493.6 Q1561.9 493.6 1561.9 497.5 Q1561.9 501.3 1564.4 501.3 Q1565.8 501.3 1566.6 500.3" stroke="#62c47c" stroke-width="1.8" fill="none"/><path d="M1569.6 493 V499.5 M1572.6 493 V499.5 M1568 495 H1575 M1568 497.6 H1575" stroke="#62c47c" stroke-width="1.5"/><path d="M1510 524.5 H1518.3 V516.2 Z" fill="#e2e2e2"/><path d="M1537.5 519 V516 H1541.5 L1543 513.8 H1552.5 V527.5 H1539.5" stroke="#c08a40" stroke-width="1.4" fill="#2a2a2a"/><path d="M1536 519.5 H1548 L1551.5 527.5 H1538.5 Z" fill="#dcb070"/><path d="M1533 547.5 H1541.3 V539.2 Z" fill="#e2e2e2"/><path d="M1560.5 542 V539 H1564.5 L1566 536.8 H1575.5 V550.5 H1562.5" stroke="#c08a40" stroke-width="1.4" fill="#2a2a2a"/><path d="M1559 542.5 H1571 L1574.5 550.5 H1561.5 Z" fill="#dcb070"/><path d="M1572.9 565.9 Q1575.5 561.9 1578.1 565.9" stroke="#2f95e0" stroke-width="1.5" fill="none"/><rect x="1572" y="567" width="7" height="5" fill="#2f95e0"/><rect x="1575" y="568" width="1.1" height="2.6" fill="#1a3a5a"/><path d="M1584.6 562.6 H1582.6 V571.4 H1584.6 M1594.4 562.6 H1596.6 V571.4 H1594.4" stroke="#b8b8b8" stroke-width="1.5" fill="none"/><path d="M1593.5 570.5 Q1591.8 571.6 1589.4 571.6 A5 5 0 1 1 1594.2 566.5 Q1594.2 568.8 1592.5 568.8 Q1591.3 568.8 1591.4 567.4 L1591.8 564.2 M1591.5 566.8 A1.9 2.4 0 1 1 1591.6 565.6" stroke="#b8b8b8" stroke-width="1.2" fill="none"/><path d="M1572.9 588.9 Q1575.5 584.9 1578.1 588.9" stroke="#2f95e0" stroke-width="1.5" fill="none"/><rect x="1572" y="590" width="7" height="5" fill="#2f95e0"/><rect x="1575" y="591" width="1.1" height="2.6" fill="#1a3a5a"/><path d="M1584.6 585.6 H1582.6 V594.4 H1584.6 M1594.4 585.6 H1596.6 V594.4 H1594.4" stroke="#b8b8b8" stroke-width="1.5" fill="none"/><path d="M1593.5 593.5 Q1591.8 594.6 1589.4 594.6 A5 5 0 1 1 1594.2 589.5 Q1594.2 591.8 1592.5 591.8 Q1591.3 591.8 1591.4 590.4 L1591.8 587.2 M1591.5 589.8 A1.9 2.4 0 1 1 1591.6 588.6" stroke="#b8b8b8" stroke-width="1.2" fill="none"/><path d="M1572.9 611.9 Q1575.5 607.9 1578.1 611.9" stroke="#2f95e0" stroke-width="1.5" fill="none"/><rect x="1572" y="613" width="7" height="5" fill="#2f95e0"/><rect x="1575" y="614" width="1.1" height="2.6" fill="#1a3a5a"/><path d="M1584.6 608.6 H1582.6 V617.4 H1584.6 M1594.4 608.6 H1596.6 V617.4 H1594.4" stroke="#b8b8b8" stroke-width="1.5" fill="none"/><path d="M1593.5 616.5 Q1591.8 617.6 1589.4 617.6 A5 5 0 1 1 1594.2 612.5 Q1594.2 614.8 1592.5 614.8 Q1591.3 614.8 1591.4 613.4 L1591.8 610.2 M1591.5 612.8 A1.9 2.4 0 1 1 1591.6 611.6" stroke="#b8b8b8" stroke-width="1.2" fill="none"/><path d="M1533.7 630.5 L1539.3 635.7 L1533.7 640.9 Z" stroke="#d0d0d0" stroke-width="1.3" fill="none"/><path d="M1559.7 631 H1564 L1565 628.7 H1575.3 V642.3 H1559.7 Z" stroke="#a0a0a0" stroke-width="1.2" stroke-dasharray="1.3 1.3" fill="none"/><path d="M1533 662.5 H1541.3 V654.2 Z" fill="#e2e2e2"/><path d="M1560.5 657 V654 H1564.5 L1566 651.8 H1575.5 V665.5 H1562.5" stroke="#c08a40" stroke-width="1.4" fill="#2a2a2a"/><path d="M1559 657.5 H1571 L1574.5 665.5 H1561.5 Z" fill="#dcb070"/><path d="M1556 685.5 H1564.3 V677.2 Z" fill="#e2e2e2"/><path d="M1583.5 680 V677 H1587.5 L1589 674.8 H1598.5 V688.5 H1585.5" stroke="#c08a40" stroke-width="1.4" fill="#2a2a2a"/><path d="M1582 680.5 H1594 L1597.5 688.5 H1584.5 Z" fill="#dcb070"/><path d="M1595.9 703.9 Q1598.5 699.9 1601.1 703.9" stroke="#2f95e0" stroke-width="1.5" fill="none"/><rect x="1595" y="705" width="7" height="5" fill="#2f95e0"/><rect x="1598" y="706" width="1.1" height="2.6" fill="#1a3a5a"/><path d="M1607.6 700.6 H1605.6 V709.4 H1607.6 M1617.4 700.6 H1619.6 V709.4 H1617.4" stroke="#b8b8b8" stroke-width="1.5" fill="none"/><path d="M1616.5 708.5 Q1614.8 709.6 1612.4 709.6 A5 5 0 1 1 1617.2 704.5 Q1617.2 706.8 1615.5 706.8 Q1614.3 706.8 1614.4 705.4 L1614.8 702.2 M1614.5 704.8 A1.9 2.4 0 1 1 1614.6 703.6" stroke="#b8b8b8" stroke-width="1.2" fill="none"/><path d="M1595.9 726.9 Q1598.5 722.9 1601.1 726.9" stroke="#2f95e0" stroke-width="1.5" fill="none"/><rect x="1595" y="728" width="7" height="5" fill="#2f95e0"/><rect x="1598" y="729" width="1.1" height="2.6" fill="#1a3a5a"/><path d="M1607.6 723.6 H1605.6 V732.4 H1607.6 M1617.4 723.6 H1619.6 V732.4 H1617.4" stroke="#b8b8b8" stroke-width="1.5" fill="none"/><path d="M1616.5 731.5 Q1614.8 732.6 1612.4 732.6 A5 5 0 1 1 1617.2 727.5 Q1617.2 729.8 1615.5 729.8 Q1614.3 729.8 1614.4 728.4 L1614.8 725.2 M1614.5 727.8 A1.9 2.4 0 1 1 1614.6 726.6" stroke="#b8b8b8" stroke-width="1.2" fill="none"/><path d="M1595.9 749.9 Q1598.5 745.9 1601.1 749.9" stroke="#2f95e0" stroke-width="1.5" fill="none"/><rect x="1595" y="751" width="7" height="5" fill="#2f95e0"/><rect x="1598" y="752" width="1.1" height="2.6" fill="#1a3a5a"/><path d="M1607.6 746.6 H1605.6 V755.4 H1607.6 M1617.4 746.6 H1619.6 V755.4 H1617.4" stroke="#b8b8b8" stroke-width="1.5" fill="none"/><path d="M1616.5 754.5 Q1614.8 755.6 1612.4 755.6 A5 5 0 1 1 1617.2 750.5 Q1617.2 752.8 1615.5 752.8 Q1614.3 752.8 1614.4 751.4 L1614.8 748.2 M1614.5 750.8 A1.9 2.4 0 1 1 1614.6 749.6" stroke="#b8b8b8" stroke-width="1.2" fill="none"/><path d="M1595.9 772.9 Q1598.5 768.9 1601.1 772.9" stroke="#2f95e0" stroke-width="1.5" fill="none"/><rect x="1595" y="774" width="7" height="5" fill="#2f95e0"/><rect x="1598" y="775" width="1.1" height="2.6" fill="#1a3a5a"/><path d="M1607.6 769.6 H1605.6 V778.4 H1607.6 M1617.4 769.6 H1619.6 V778.4 H1617.4" stroke="#b8b8b8" stroke-width="1.5" fill="none"/><path d="M1616.5 777.5 Q1614.8 778.6 1612.4 778.6 A5 5 0 1 1 1617.2 773.5 Q1617.2 775.8 1615.5 775.8 Q1614.3 775.8 1614.4 774.4 L1614.8 771.2 M1614.5 773.8 A1.9 2.4 0 1 1 1614.6 772.6" stroke="#b8b8b8" stroke-width="1.2" fill="none"/><path d="M1572.9 795.9 Q1575.5 791.9 1578.1 795.9" stroke="#2f95e0" stroke-width="1.5" fill="none"/><rect x="1572" y="797" width="7" height="5" fill="#2f95e0"/><rect x="1575" y="798" width="1.1" height="2.6" fill="#1a3a5a"/><path d="M1584.6 792.6 H1582.6 V801.4 H1584.6 M1594.4 792.6 H1596.6 V801.4 H1594.4" stroke="#b8b8b8" stroke-width="1.5" fill="none"/><path d="M1593.5 800.5 Q1591.8 801.6 1589.4 801.6 A5 5 0 1 1 1594.2 796.5 Q1594.2 798.8 1592.5 798.8 Q1591.3 798.8 1591.4 797.4 L1591.8 794.2 M1591.5 796.8 A1.9 2.4 0 1 1 1591.6 795.6" stroke="#b8b8b8" stroke-width="1.2" fill="none"/><path d="M1549.9 818.9 Q1552.5 814.9 1555.1 818.9" stroke="#2f95e0" stroke-width="1.5" fill="none"/><rect x="1549" y="820" width="7" height="5" fill="#2f95e0"/><rect x="1552" y="821" width="1.1" height="2.6" fill="#1a3a5a"/><path d="M1561.6 815.6 H1559.6 V824.4 H1561.6 M1571.4 815.6 H1573.6 V824.4 H1571.4" stroke="#b8b8b8" stroke-width="1.5" fill="none"/><path d="M1570.5 823.5 Q1568.8 824.6 1566.4 824.6 A5 5 0 1 1 1571.2 819.5 Q1571.2 821.8 1569.5 821.8 Q1568.3 821.8 1568.4 820.4 L1568.8 817.2 M1568.5 819.8 A1.9 2.4 0 1 1 1568.6 818.6" stroke="#b8b8b8" stroke-width="1.2" fill="none"/><path d="M1549.9 841.9 Q1552.5 837.9 1555.1 841.9" stroke="#2f95e0" stroke-width="1.5" fill="none"/><rect x="1549" y="843" width="7" height="5" fill="#2f95e0"/><rect x="1552" y="844" width="1.1" height="2.6" fill="#1a3a5a"/><path d="M1562 839 V835 H1570 L1574 839 V850.5 H1565" stroke="#b0b0b0" stroke-width="1.3" fill="none"/><circle cx="1562" cy="842.5" r="2.8" fill="#c0c0c0"/><rect x="1561.2" y="839" width="1.6" height="3" fill="#252526"/><rect x="1561.2" y="844" width="1.6" height="6.5" fill="#c0c0c0"/><path d="M1510.7 860.5 L1516.3 865.7 L1510.7 870.9 Z" stroke="#d0d0d0" stroke-width="1.3" fill="none"/><path d="M1536.5 861 H1541 V858.7 Q1541 858 1542 858 H1552 Q1553 858 1553 859 V872.5 H1536.5 Z" fill="#dcb070" stroke="#c08a40" stroke-width="0.8"/><rect x="1542" y="859.2" width="10" height="1.3" fill="#8a6a3a"/><path d="M1538.6 896.4 V881.3 H1546.4 M1546.4 884.7 H1548.5 M1551.2 886 V896.4 H1538.6" stroke="#a8a8a8" stroke-width="1.3" stroke-dasharray="1.3 1.3" fill="none"/><path d="M1538.6 908 V903.3 H1546.4 M1546.4 906.7 H1548.5" stroke="#a8a8a8" stroke-width="1.3" stroke-dasharray="1.3 1.3" fill="none"/><rect x="1573" y="906" width="2" height="1.3" fill="#bbb"/><rect x="1578" y="907" width="1.5" height="1.3" fill="#bbb"/><rect x="1582" y="906" width="2" height="1.3" fill="#bbb"/><defs><pattern id="grip" x="0" y="0" width="2" height="2" patternUnits="userSpaceOnUse"><rect x="0" y="0" width="1" height="1" fill="#46464a"/><rect x="1" y="1" width="1" height="1" fill="#3c3c40"/></pattern></defs><rect x="1602" y="60" width="198" height="6" fill="url(#grip)"/><path d="M1809 60 H1819 L1814 65 Z" fill="#e0e0e0"/><rect x="1831" y="56.5" width="7" height="8" fill="#e0e0e0"/><rect x="1835" y="57.5" width="1.3" height="6" fill="#2d2d30"/><rect x="1829" y="64" width="11" height="1.6" fill="#e0e0e0"/><rect x="1833.8" y="65" width="1.5" height="6" fill="#e0e0e0"/><path d="M1851 58 L1861 68 M1861 58 L1851 68" stroke="#e8e8e8" stroke-width="1.6"/><circle cx="1492" cy="94" r="7" fill="#555"/><path d="M1488 94 H1496 M1491.5 90.5 L1488 94 L1491.5 97.5" stroke="#2d2d30" stroke-width="1.8" fill="none"/><circle cx="1519" cy="94" r="7" fill="#555"/><path d="M1515 94 H1523 M1519.5 90.5 L1523 94 L1519.5 97.5" stroke="#2d2d30" stroke-width="1.8" fill="none"/><path d="M1538.5 95 L1545.5 87.5 L1552.5 95 M1540 93.5 V102 H1551 V93.5 M1550 89.5 V85" stroke="#c8c8c8" stroke-width="1.5" fill="none"/><rect x="1544" y="96" width="3" height="6" fill="#c8c8c8"/><path d="M1573 85 H1577 V84 H1583.5 V95 H1573 Z" fill="#dca35a"/><rect x="1577.5" y="85" width="5" height="1.2" fill="#8a6a3a"/><rect x="1565.7" y="90.2" width="11" height="9" stroke="#b8b8b8" stroke-width="1.4" fill="#2d2d30"/><path d="M1567 87 Q1567 84.5 1570 84.5 M1568.5 83 L1570.5 84.5 L1568.5 86.3" stroke="#6cb8f6" stroke-width="1.3" fill="none"/><path d="M1582 98 Q1582 100 1579 100 M1580.5 98.5 L1578.5 100 L1580.5 101.7" stroke="#6cb8f6" stroke-width="1.3" fill="none"/><path d="M1590 93 H1598 L1594 97.5 Z" fill="#999"/><rect x="1607" y="81" width="1" height="24" fill="#3f3f46"/><path d="M1618 84.5 H1623 L1620.5 87.5 Z" fill="#b0b0b0"/><circle cx="1628" cy="95.5" r="5.2" stroke="#c0c0c0" stroke-width="1.4" fill="none"/><path d="M1628 92.5 V96 H1630.5" stroke="#c0c0c0" stroke-width="1.3" fill="none"/><path d="M1643 93 H1650 L1646.5 97 Z" fill="#999"/><path d="M1674 95 A6.3 6.3 0 1 1 1667.3 88.6" stroke="#6cb8f6" stroke-width="2.3" fill="none"/><path d="M1666.5 84 L1672.5 88.5 L1666.5 92.5 Z" fill="#6cb8f6"/><rect x="1688" y="93" width="8" height="7" stroke="#b8b8b8" stroke-width="1.3" fill="none"/><path d="M1690.5 90.5 H1699 V97.5 M1693 88 H1701.5 V95" stroke="#b8b8b8" stroke-width="1.3" fill="none"/><rect x="1690" y="96" width="4" height="1.3" fill="#6cb8f6"/><rect x="1708.5" y="79.5" width="26" height="28" stroke="#3399ff" stroke-width="1.2" fill="none"/><path d="M1715 97 V86 H1722 L1725 89 M1718 83 H1726 L1729 86 V95" stroke="#b8b8b8" stroke-width="1.3" fill="none"/><path d="M1717.5 88.5 H1724 L1727 91.5 V103 H1717.5 Z" stroke="#c8c8c8" stroke-width="1.3" fill="#2d2d30"/><path d="M1720 94 H1724.5 M1720 96.5 H1724.5 M1720 99 H1724.5" stroke="#b0b0b0" stroke-width="1"/><rect x="1740" y="81" width="1" height="24" fill="#3f3f46"/><path d="M1755 89.5 L1751 94 L1755 98.5 M1761 89.5 L1765 94 L1761 98.5" stroke="#d0d0d0" stroke-width="1.5" fill="none"/><path d="M1777 102 L1786 93" stroke="#b8b8b8" stroke-width="2.8"/><path d="M1784.5 91.5 A4.5 4.5 0 0 1 1792 86 L1789 89.5 L1790.5 91.5 L1794 88.5 A4.5 4.5 0 0 1 1788 95.5 Z" fill="#b8b8b8"/><rect x="1799.5" y="79.5" width="27" height="28" stroke="#3399ff" stroke-width="1.2" fill="none"/><rect x="1803" y="95" width="7" height="1.6" fill="#c8c8c8"/><rect x="1810" y="91" width="12" height="5.6" fill="#b8b8b8"/><circle cx="1846.5" cy="121" r="4.4" stroke="#e8e8e8" stroke-width="2.2" fill="none"/><path d="M1843 124.5 L1837.8 129.7" stroke="#e8e8e8" stroke-width="3" stroke-linecap="round"/><rect x="1856" y="112" width="15" height="25" fill="#3f3f46"/><path d="M1859 123 H1866 L1862.5 127 Z" fill="#e0e0e0"/><path d="M1855 154.5 H1866 L1860.5 148.5 Z" fill="#999"/><path d="M1855 895 H1866 L1860.5 901 Z" fill="#999"/></svg>
<div class="a" style="left:1473px;top:908px;width:128px;height:25px;background:#252526;box-sizing:border-box;border:1px solid #3f3f46;border-top:none;"></div>
<div class="t" style="left:1480.0px;top:920.87px;font-size:15.1px;color:#0097fb;">Solution Explorer</div>
<div class="t" style="left:1608.0px;top:920.93px;font-size:14.9px;color:#d0d0d0;">Team Explorer</div>
<div class="t" style="left:1717.0px;top:921.23px;font-size:14.02px;color:#d0d0d0;">Live Share</div>
<div class="t" style="left:1798.0px;top:920.75px;font-size:15.43px;color:#d0d0d0;">GitHub</div>
<div class="t" style="left:1882px;top:50px;font-size:15.1px;color:#d0d0d0;writing-mode:vertical-rl;line-height:14px">Diagnostic Tools</div>
<div class="t" style="left:1882px;top:174px;font-size:14.7px;color:#d0d0d0;writing-mode:vertical-rl;line-height:14px">Properties</div>
<svg class="a" style="left:0;top:900px" width="1901" height="99" viewBox="0 900 1901 99"><path d="M64 920 H71.2 L67.6 924 Z" fill="#f0f0f0"/><circle cx="111.8" cy="921.2" r="7.6" fill="#4f7a2c" stroke="#c8d8c8" stroke-width="1.2"/><path d="M108 921.5 L110.8 924.5 L115.5 917.5" stroke="#ffffff" stroke-width="2" fill="none"/><rect x="303" y="913" width="1.6" height="16" fill="#d0d0d0"/><path d="M323.5 921 L329.5 915.5 L335 921 L329.5 927.5 Z" stroke="#b8b8b8" stroke-width="1.2" fill="none"/><path d="M327 917.5 L332 913.5 L336 917.5 L332 922 Z" fill="#c8c8c8"/><path d="M333 915 L337 912" stroke="#c8c8c8" stroke-width="1.3"/><path d="M343 918.7 H351 L347 923.5 Z" fill="#f0f0f0"/><path d="M395 916 V927 L389 921.5 Z" fill="#999"/><path d="M1206 916 V927 L1212 921.5 Z" fill="#999"/><path d="M0.5 981.3 H15.5 L12 993.8 H0.5" stroke="#ffffff" stroke-width="1.4" fill="none"/><path d="M1457 994.5 V982.5 M1452 987.5 L1457 982 L1462 987.5" stroke="#dcdcdc" stroke-width="2.2" fill="none"/><path d="M1514 991.5 L1523 982.5 L1526 985.5 L1517 994.5 H1514 Z" fill="#dcdcdc"/><rect x="1522" y="980.5" width="4" height="2" transform="rotate(45 1524 981.5)" fill="#dcdcdc"/><path d="M1581 978 L1590 987 L1581 996 L1572 987 Z" fill="#dcdcdc"/><path d="M1580 981 V992 M1580 984 L1584 988 V990" stroke="#007acc" stroke-width="1.3" fill="none"/><circle cx="1580" cy="992" r="1.3" fill="#007acc"/><circle cx="1584" cy="990" r="1.3" fill="#007acc"/><path d="M1757 994.5 V988 L1750 981 M1757 988 L1764.5 981" stroke="#dcdcdc" stroke-width="2" fill="none"/><path d="M1748.5 980 H1753.5 L1748.5 985 Z M1765.5 979.5 V984.5 L1760.5 979.5 Z" fill="#dcdcdc"/><path d="M1826 990 L1831 985 L1836 990 Z" fill="#ffffff"/><path d="M1872 990 Q1874 989 1874 984 Q1874 978.5 1879.5 978.5 Q1885 978.5 1885 984 Q1885 989 1888 990 V991.5 H1872 Z" fill="#dcdcdc"/><path d="M1877.5 992 Q1879.5 996 1881.5 992 Z" fill="#dcdcdc"/></svg>
</body></html>
